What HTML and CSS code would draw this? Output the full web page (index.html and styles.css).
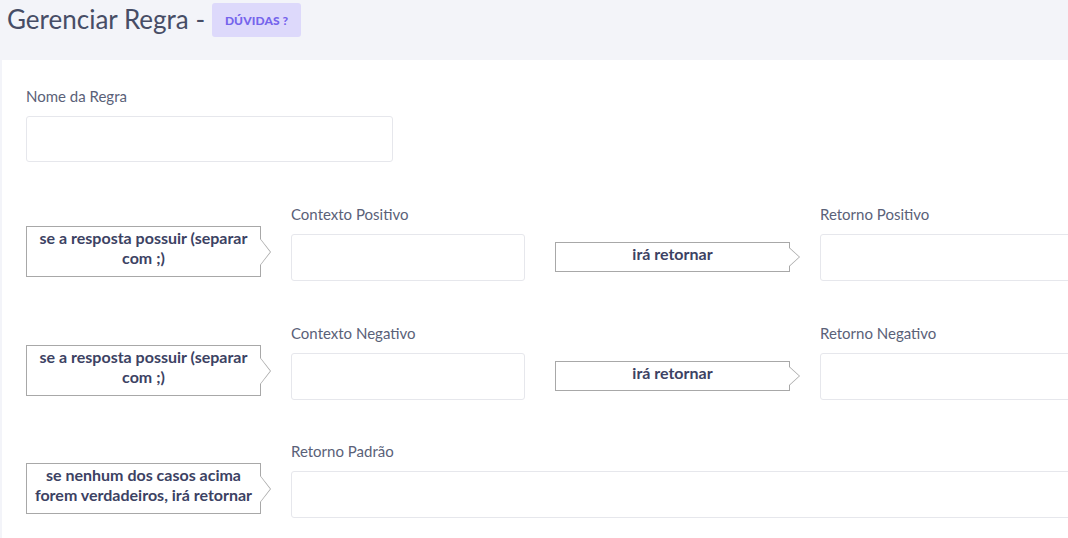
FILE: index.html
```html
<!DOCTYPE html>
<html lang="pt">
<head>
<meta charset="utf-8">
<title>Gerenciar Regra</title>
<link rel="stylesheet" href="styles.css">
</head>
<body>
<div class="page">
  <header class="header">
    <h1 class="title">Gerenciar Regra -</h1>
    <span class="badge">DÚVIDAS ?</span>
  </header>
  <main class="card">
    <div class="field name-field">
      <label class="label">Nome da Regra</label>
      <div class="input"></div>
    </div>

    <div class="row first">
      <div class="arrow-box big">se a resposta possuir (separar com ;)</div>
      <div class="field col">
        <label class="label">Contexto Positivo</label>
        <div class="input"></div>
      </div>
      <div class="arrow-box small">irá retornar</div>
      <div class="field col wide">
        <label class="label">Retorno Positivo</label>
        <div class="input"></div>
      </div>
    </div>

    <div class="row">
      <div class="arrow-box big">se a resposta possuir (separar com ;)</div>
      <div class="field col">
        <label class="label">Contexto Negativo</label>
        <div class="input"></div>
      </div>
      <div class="arrow-box small">irá retornar</div>
      <div class="field col wide">
        <label class="label">Retorno Negativo</label>
        <div class="input"></div>
      </div>
    </div>

    <div class="row last">
      <div class="arrow-box big">se nenhum dos casos acima forem verdadeiros, irá retornar</div>
      <div class="field col full">
        <label class="label">Retorno Padrão</label>
        <div class="input"></div>
      </div>
    </div>
  </main>
</div>
</body>
</html>
```

FILE: styles.css
```css
* { box-sizing: border-box; }
html, body {
  margin: 0;
  padding: 0;
  background: #f3f4f9;
  overflow: hidden;
  font-family: "Lato", "Open Sans", sans-serif;
}
.page {
  width: 1068px;
  height: 538px;
  overflow: hidden;
}
.header {
  height: 60px;
  display: flex;
  align-items: flex-start;
  padding: 2px 0 0 7px;
  gap: 7px;
}
.title {
  margin: 0;
  font-size: 26px;
  font-weight: 400;
  color: #474d66;
  line-height: 34px;
}
.badge {
  display: inline-flex;
  align-items: center;
  justify-content: center;
  width: 89px;
  height: 34px;
  margin-top: 1px;
  background: #ddd9fb;
  color: #7564ec;
  font-size: 12px;
  font-weight: 900;
  border-radius: 3px;
  letter-spacing: 0.1px;
}
.card {
  margin-left: 2px;
  background: #fff;
  height: 478px;
  padding: 26px 0 0 24px;
  width: 1200px;
}
.field { display: flex; flex-direction: column; }
.label {
  font-size: 15px;
  color: #5a6178;
  line-height: 20px;
  height: 20px;
  margin-bottom: 10px;
}
.input {
  height: 47px;
  border: 1px solid #e6e7ec;
  border-radius: 3px;
  background: #fff;
}
.name-field { width: 367px; }
.name-field .input { height: 46px; }
.row {
  display: flex;
  align-items: flex-start;
  margin-top: 42px;
}
.row.first { margin-top: 42px; }
.row.last { margin-top: 41px; }
.col { width: 234px; margin-left: 30px; }
.col.wide { width: 300px; }
.col.full { width: 800px; }
.arrow-box {
  position: relative;
  width: 235px;
  border: 1px solid #a8a8a8;
  background: #fff;
  color: #3c4263;
  font-weight: 700;
  font-size: 16px;
  text-align: center;
  line-height: 20px;
}
.arrow-box.big {
  margin-top: 22px;
  height: 51px;
  padding: 1px 4px 0;
}
.arrow-box.small {
  margin-top: 38px;
  margin-left: 30px;
  height: 30px;
  padding-top: 1px;
}
.arrow-box::before,
.arrow-box::after {
  content: "";
  position: absolute;
  top: 50%;
  width: 0;
  height: 0;
  border-style: solid;
  border-color: transparent;
}
.arrow-box.big::before {
  right: -11px;
  margin-top: -14px;
  border-width: 14px 0 14px 11px;
  border-left-color: #a8a8a8;
}
.arrow-box.big::after {
  right: -10px;
  margin-top: -13px;
  border-width: 13px 0 13px 10px;
  border-left-color: #fff;
}
.arrow-box.small::before {
  right: -11px;
  margin-top: -10px;
  border-width: 10px 0 10px 11px;
  border-left-color: #a8a8a8;
}
.arrow-box.small::after {
  right: -9.6px;
  margin-top: -9px;
  border-width: 9px 0 9px 10px;
  border-left-color: #fff;
}
```
